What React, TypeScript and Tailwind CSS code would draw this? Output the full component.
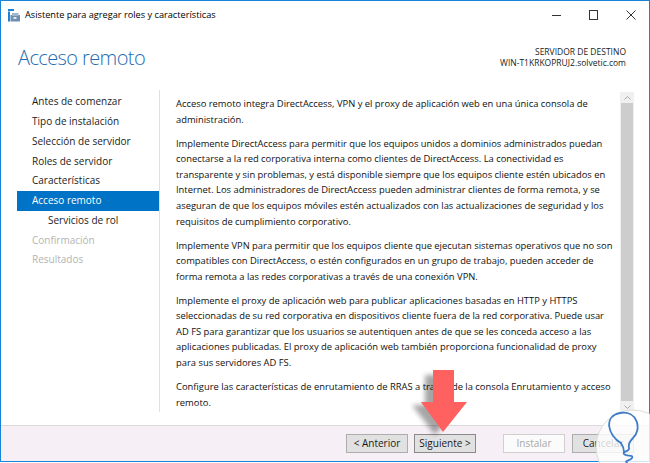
import React from 'react';

const navItems = [
  { label: 'Antes de comenzar', state: 'normal' },
  { label: 'Tipo de instalación', state: 'normal' },
  { label: 'Selección de servidor', state: 'normal' },
  { label: 'Roles de servidor', state: 'normal' },
  { label: 'Características', state: 'normal' },
  { label: 'Acceso remoto', state: 'active' },
  { label: 'Servicios de rol', state: 'sub' },
  { label: 'Confirmación', state: 'disabled' },
  { label: 'Resultados', state: 'disabled' },
];

const paragraphs = [
  [
    'Acceso remoto integra DirectAccess, VPN y el proxy de aplicación web en una única consola de',
    'administración.',
  ],
  [
    'Implemente DirectAccess para permitir que los equipos unidos a dominios administrados puedan',
    'conectarse a la red corporativa interna como clientes de DirectAccess. La conectividad es',
    'transparente y sin problemas, y está disponible siempre que los equipos cliente estén ubicados en',
    'Internet. Los administradores de DirectAccess pueden administrar clientes de forma remota, y se',
    'aseguran de que los equipos móviles estén actualizados con las actualizaciones de seguridad y los',
    'requisitos de cumplimiento corporativo.',
  ],
  [
    'Implemente VPN para permitir que los equipos cliente que ejecutan sistemas operativos que no son',
    'compatibles con DirectAccess, o estén configurados en un grupo de trabajo, pueden acceder de',
    'forma remota a las redes corporativas a través de una conexión VPN.',
  ],
  [
    'Implemente el proxy de aplicación web para publicar aplicaciones basadas en HTTP y HTTPS',
    'seleccionadas de su red corporativa en dispositivos cliente fuera de la red corporativa. Puede usar',
    'AD FS para garantizar que los usuarios se autentiquen antes de que se les conceda acceso a las',
    'aplicaciones publicadas. El proxy de aplicación web también proporciona funcionalidad de proxy',
    'para sus servidores AD FS.',
  ],
  [
    'Configure las características de enrutamiento de RRAS a través de la consola Enrutamiento y acceso',
    'remoto.',
  ],
];

const WizardIcon = () => (
  <svg width="12" height="13" viewBox="0 0 12 13">
    <rect x="0" y="0" width="6" height="2" fill="#1e7fd6" />
    <rect x="0" y="2.5" width="2" height="10" fill="#1e7fd6" />
    <rect x="2.5" y="6" width="9.5" height="6.5" fill="#6f8fae" />
    <rect x="4" y="4" width="6.5" height="3" fill="#9fb6cc" />
    <rect x="5.5" y="8" width="3" height="2" fill="#dfe8f1" />
  </svg>
);

const Chevron = ({ up }: { up?: boolean }) => (
  <svg width="7" height="4" viewBox="0 0 7 4">
    <path d={up ? 'M0.5 3.5 L3.5 0.5 L6.5 3.5' : 'M0.5 0.5 L3.5 3.5 L6.5 0.5'} fill="none" stroke="#a6a6a6" strokeWidth="1" />
  </svg>
);

const App: React.FC = () => {
  return (
    <div className="relative w-[650px] h-[463px] bg-white overflow-hidden font-['Open_Sans','Noto_Sans',sans-serif] text-[#1b1b1b]">
      <div className="h-[462px] border border-[#1883d7] flex flex-col">
        {/* Title bar */}
        <div className="h-[28px] flex items-center pl-[7px] shrink-0">
          <WizardIcon />
          <span className="ml-[5px] text-[9.2px] text-black">Asistente para agregar roles y características</span>
          <div className="ml-auto flex items-center h-full">
            <div className="w-[37px] h-full flex items-center justify-center">
              <div className="w-[9px] h-px bg-[#333]" />
            </div>
            <div className="w-[37px] h-full flex items-center justify-center">
              <div className="w-[9px] h-[10px] border border-[#333]" />
            </div>
            <div className="w-[37px] h-full flex items-center justify-center">
              <svg width="10" height="10" viewBox="0 0 10 10">
                <path d="M0.5 0.5 L9.5 9.5 M9.5 0.5 L0.5 9.5" stroke="#333" strokeWidth="1" />
              </svg>
            </div>
          </div>
        </div>

        {/* Header */}
        <div className="h-[61px] flex justify-between shrink-0">
          <h1 className="pl-[17px] pt-[19px] text-[20px] tracking-[-0.6px] font-light text-[#1f6cb3] leading-none">Acceso remoto</h1>
          <div className="pr-[23px] pt-[17px] text-right text-[8.5px] leading-[11px] text-[#222]">
            <div>SERVIDOR DE DESTINO</div>
            <div>WIN-T1KRKOPRUJ2.solvetic.com</div>
          </div>
        </div>

        {/* Main */}
        <div className="h-[322px] flex shrink-0">
          <nav className="w-[158px] pl-[16px] pt-[2px] shrink-0">
            {navItems.map((item) => (
              <div
                key={item.label}
                className={`h-[19.75px] flex items-center text-[10px] ${
                  item.state === 'active'
                    ? 'bg-[#0173c7] text-white pl-[15px]'
                    : item.state === 'sub'
                    ? 'pl-[31px] text-[#1b1b1b]'
                    : item.state === 'disabled'
                    ? 'pl-[15px] text-[#b4b4b4]'
                    : 'pl-[15px] text-[#1b1b1b]'
                }`}
              >
                {item.label}
              </div>
            ))}
          </nav>
          <div className="w-px bg-[#e0e0e0] shrink-0" />
          <div className="flex-1 flex pt-[2px] pr-[15px]">
            <div className="flex-1 pl-[16px] pt-[4px] text-[9.4px] leading-[15.6px] text-[#111] whitespace-nowrap">
              {paragraphs.map((lines, i) => (
                <p key={i} className="mb-[8.4px]">
                  {lines.map((l, j) => (
                    <React.Fragment key={j}>
                      {l}
                      {j < lines.length - 1 && <br />}
                    </React.Fragment>
                  ))}
                </p>
              ))}
            </div>
            <div className="w-[14px] bg-[#f0f0f0] flex flex-col items-center">
              <div className="h-[11px] flex items-center justify-center"><Chevron up /></div>
              <div className="flex-1 w-[12px] bg-[#cdcdcd]" />
              <div className="h-[11px] flex items-center justify-center"><Chevron /></div>
            </div>
          </div>
        </div>

        <div className="flex-1" />

        {/* Footer */}
        <div className="h-[36px] border-t border-[#dadada] bg-[#f6f0f6] flex items-center justify-end pr-[15px] gap-[6px] text-[10px] shrink-0">
          <button className="w-[62px] h-[19px] bg-[#e1e1e1] border border-[#adadad] text-[#1b1b1b]">&lt; Anterior</button>
          <button className="w-[62px] h-[19px] bg-[#e1e1e1] border border-[#8a8a8a] text-[#1b1b1b] mr-[21px]">Siguiente &gt;</button>
          <button className="w-[62px] h-[19px] bg-[#fbfbfb] border border-[#d0d0d0] text-[#a8a8a8] mr-[1px]">Instalar</button>
          <button className="w-[62px] h-[19px] bg-[#e1e1e1] border border-[#adadad] text-[#1b1b1b]">Cancelar</button>
        </div>
      </div>

      {/* Red arrow overlay */}
      <svg className="absolute left-[410px] top-[362px]" width="70" height="80" viewBox="0 0 70 80">
        <defs>
          <filter id="sh" x="-50%" y="-50%" width="200%" height="200%">
            <feGaussianBlur stdDeviation="2.5" />
          </filter>
        </defs>
        <path d="M19 10 H39 V40 H52 L29 70 L6 40 H19 Z" fill="#000" opacity="0.35" filter="url(#sh)" transform="translate(-4 3)" />
        <path d="M23 8 H44 V40 H57 L33 70 L11 40 H23 Z" fill="#ff6161" />
      </svg>

      {/* Watermark logo */}
      <svg className="absolute left-[594px] top-[408px]" width="80" height="80" viewBox="0 0 80 80">
        <circle cx="39" cy="39" r="37" fill="#ffffff" fillOpacity="0.8" stroke="#dcdcdc" strokeWidth="1" />
        <path
          d="M27 35 C14 28 9 8 26 5 C44 2 48 22 39 30 C36 33 34 36 35 40 C36 44 28 43 30 46 C32 49 40 46 38 50 C36 53 30 52 33 55"
          fill="none"
          stroke="#3f7dc8"
          strokeWidth="1.8"
          strokeLinecap="round"
        />
        <path d="M27 35 C29 38 30 41 30 44" fill="none" stroke="#3f7dc8" strokeWidth="1.8" strokeLinecap="round" />
      </svg>
    </div>
  );
};

export default App;
